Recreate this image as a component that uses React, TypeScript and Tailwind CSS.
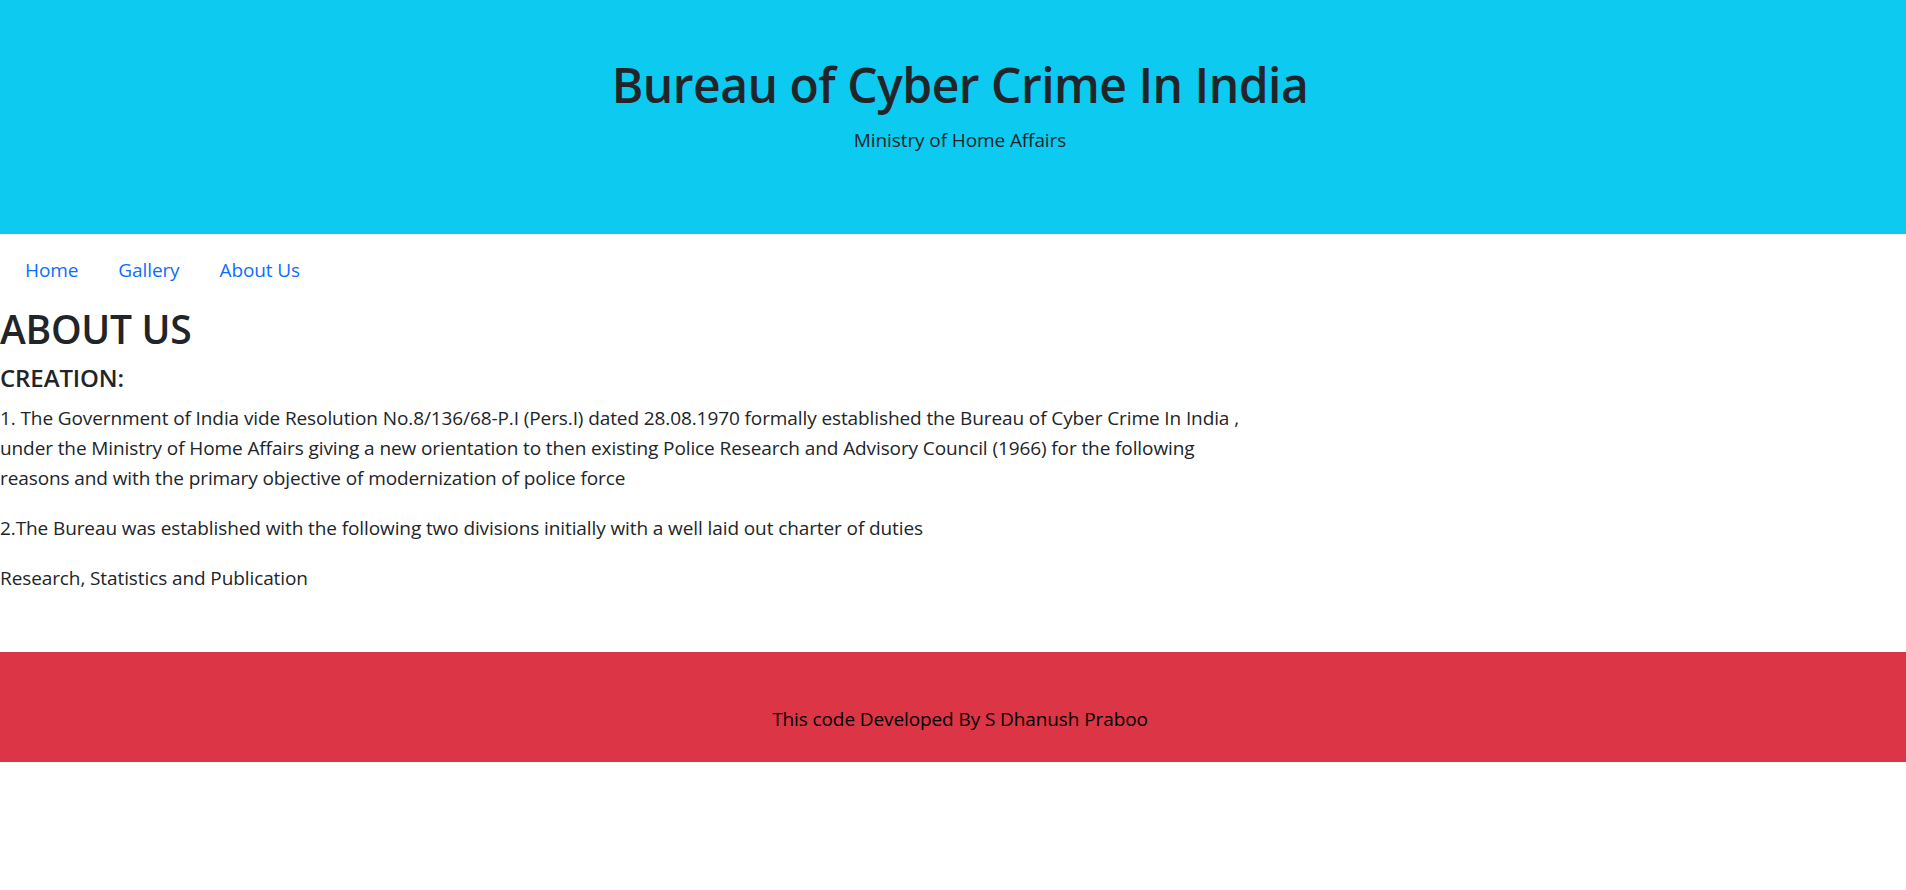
function App() {
  return (
    <div className="min-h-screen bg-white text-[#212529] font-['Open_Sans',sans-serif] text-[19px] leading-[30px] tracking-[-0.1px]">
      <header className="bg-[#0dcaf0] pt-[55px] pb-[79px] pl-[14px] text-center">
        <h1 className="text-[48px] leading-[60px] font-semibold tracking-[-0.5px]">Bureau of Cyber Crime In India</h1>
        <p className="mt-[10px]">Ministry of Home Affairs</p>
      </header>

      <nav className="mt-[11px]">
        <ul className="flex">
          <li><a href="#" className="block px-[20px] py-[10px] pl-[25px] text-[#0d6efd]">Home</a></li>
          <li><a href="#" className="block px-[20px] py-[10px] text-[#0d6efd]">Gallery</a></li>
          <li><a href="#" className="block px-[20px] py-[10px] text-[#0d6efd]">About Us</a></li>
        </ul>
      </nav>

      <main className="max-w-[1255px] mt-[10px]">
        <h2 className="text-[39px] leading-[48px] font-semibold tracking-[-0.3px] mb-[10px]">ABOUT US</h2>
        <h5 className="text-[24px] leading-[30px] font-semibold mb-[10px]">CREATION:</h5>
        <p className="mb-[20px]">
          1. The Government of India vide Resolution No.8/136/68-P.I (Pers.I) dated 28.08.1970 formally established the Bureau of Cyber Crime In India , under the Ministry of Home Affairs giving a new orientation to then existing Police Research and Advisory Council (1966) for the following reasons and with the primary objective of modernization of police force
        </p>
        <p className="mb-[20px]">2.The Bureau was established with the following two divisions initially with a well laid out charter of duties</p>
        <p className="mb-[20px]">Research, Statistics and Publication</p>
      </main>

      <footer className="mt-[59px] bg-[#dc3545] pt-[52px] pb-[28px] pl-[14px] text-center text-black">
        <p>This code Developed By S Dhanush Praboo</p>
      </footer>
    </div>
  );
}

export default App;
